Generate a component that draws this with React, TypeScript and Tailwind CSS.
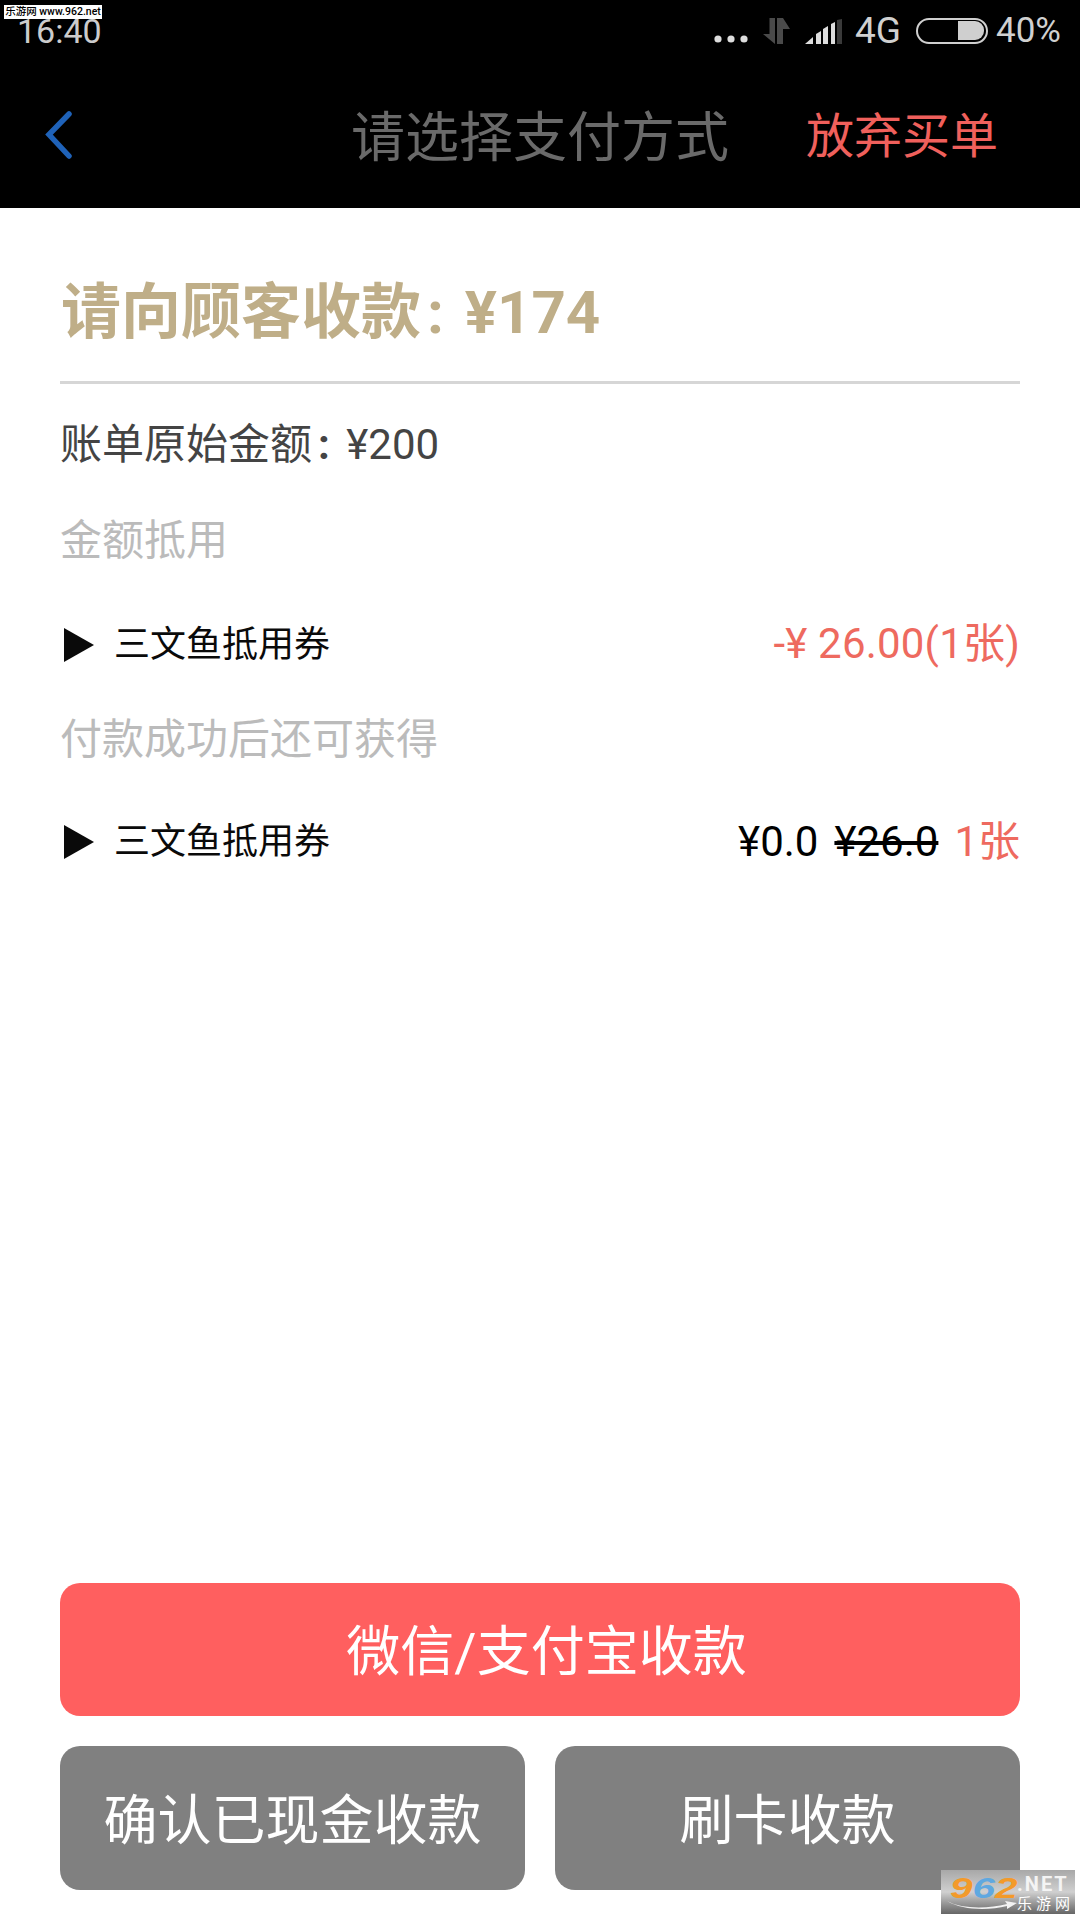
import React from "react";

const font = { fontFamily: 'Roboto, "Noto Sans CJK SC", sans-serif' };

function Triangle() {
  return (
    <svg width="30" height="34" viewBox="0 0 30 34" className="shrink-0">
      <polygon points="0,0 30,17 0,34" fill="#0a0a0a" />
    </svg>
  );
}

function Colon() {
  return <span className="ml-[6px] mr-[6px] font-bold">:</span>;
}

function StatusIcons() {
  return (
    <div className="flex h-[35px] items-center">
      <svg width="34" height="26" viewBox="0 0 34 26">
        <circle cx="4" cy="21" r="3.6" fill="#ddd" />
        <circle cx="17" cy="21" r="3.6" fill="#ddd" />
        <circle cx="30" cy="21" r="3.6" fill="#ddd" />
      </svg>
      <svg width="27" height="26" viewBox="0 0 27 26" className="ml-[15px]">
        <path d="M6.5 0H12V26L0 16H6.5z" fill="#4a4a4a" />
        <path d="M14 0H20L27 11H20V26H14z" fill="#4a4a4a" />
      </svg>
      <svg width="37" height="26" viewBox="0 0 37 26" className="ml-[15px]">
        <path d="M0 26 8 19V26z" fill="#ddd" />
        <path d="M11 16 16 13V26H11z" fill="#ddd" />
        <path d="M18 11 23 8V26H18z" fill="#ddd" />
        <path d="M26 6 30 4V26H26z" fill="#ddd" />
        <path d="M32 2 37 1V26H32z" fill="#3a3a3a" />
      </svg>
      <span className="ml-[13px] text-[37px] leading-none text-[#d0d0d0]">4G</span>
      <div className="ml-[15px] flex h-[26px] w-[72px] items-center justify-end rounded-full border-2 border-[#cfcfcf] pr-[2px]">
        <div className="h-[19px] w-[26px] rounded-r-[9px] bg-[#cfcfcf]" />
      </div>
      <span className="ml-[8px] text-[35px] leading-none text-[#d0d0d0]">40%</span>
    </div>
  );
}

export default function App() {
  return (
    <div style={font} className="relative flex h-[1920px] w-[1080px] flex-col overflow-hidden bg-white">
      <header className="h-[208px] shrink-0 bg-black">
        <div className="flex h-[62px] items-start justify-between pl-[17px] pr-[19px] pt-[13px]">
          <span className="mt-[1px] text-[34px] leading-none text-[#cccccc]">16:40</span>
          <StatusIcons />
        </div>
        <div className="relative flex h-[146px] items-start">
          <svg width="30" height="48" viewBox="0 0 30 48" className="ml-[43px] mt-[49px] shrink-0">
            <path d="M26 3 6 23.5 26 45" fill="none" stroke="#1f62b8" strokeWidth="5.5" strokeLinecap="round" />
          </svg>
          <span className="ml-[278px] mt-[44px] text-[54px] leading-[66px] text-[#6a6a6a]">请选择支付方式</span>
          <span className="ml-[77px] mt-[45px] text-[48px] leading-[60px] text-[#f0605c]">放弃买单</span>
        </div>
      </header>

      <main className="flex flex-1 flex-col px-[60px]">
        <h1 className="mt-[67px] h-[76px] pl-[1px] text-[60px] font-bold leading-[76px] text-[#bfae88]">请向顾客收款<Colon /> ¥174</h1>
        <div className="mt-[30px] h-[3px] bg-[#d6d6d6]" />
        <p className="mt-[33px] text-[42px] leading-[56px] text-[#444444]">账单原始金额<Colon /> ¥200</p>
        <p className="mt-[40px] text-[42px] leading-[56px] text-[#bbbbbb]">金额抵用</p>

        <div className="mt-[48px] flex h-[56px] items-center">
          <span className="ml-[4px]"><Triangle /></span>
          <span className="ml-[20px] text-[36px] leading-none text-[#0a0a0a]">三文鱼抵用券</span>
          <span className="ml-auto -mt-[2px] text-[42px] leading-none tracking-[0.2px] text-[#ee6a5f]">-¥ 26.00(1张)</span>
        </div>
        <p className="mt-[39px] text-[42px] leading-[56px] text-[#bbbbbb]">付款成功后还可获得</p>
        <div className="mt-[46px] flex h-[56px] items-center">
          <span className="ml-[4px]"><Triangle /></span>
          <span className="ml-[20px] text-[36px] leading-none text-[#0a0a0a]">三文鱼抵用券</span>
          <span className="ml-auto text-[42px] leading-none text-black">¥0.0</span>
          <span className="ml-[16px] text-[42px] leading-none text-black line-through">¥26.0</span>
          <span className="ml-[16px] text-[42px] leading-none text-[#ee6a5f]">1张</span>
        </div>

        <div className="mt-auto mb-[30px] flex flex-col gap-[30px]">
          <button className="flex h-[133px] items-center justify-center rounded-[20px] bg-[#ff5f5f] pl-[13px] pt-[6px] text-[54px] text-white">微信/支付宝收款</button>
          <div className="flex gap-[30px]">
            <button className="flex h-[144px] flex-1 items-center justify-center rounded-[20px] bg-[#808080] pt-[6px] text-[54px] text-white">确认已现金收款</button>
            <button className="flex h-[144px] flex-1 items-center justify-center rounded-[20px] bg-[#808080] pt-[6px] text-[54px] text-white">刷卡收款</button>
          </div>
        </div>
      </main>

      <div className="absolute left-[4px] top-[5px] flex h-[14px] w-[98px] items-center justify-center whitespace-nowrap bg-white text-[10.5px] font-medium leading-none text-black">乐游网 www.962.net</div>

      <div className="absolute left-[941px] top-[1870px] flex h-[44px] w-[134px] bg-gradient-to-b from-[#a8a8a8] via-[#d0d0d0] to-[#666666]">
        <div className="relative w-[76px] shrink-0">
          <span className="absolute left-[9px] top-[3px] origin-left scale-x-[1.35] text-[30px] font-black italic leading-none text-[#f39a2a]" style={{ fontFamily: '"Liberation Sans", sans-serif' }}>9<span className="text-[#5fa8e0]">6</span>2</span>
          <svg width="70" height="12" viewBox="0 0 70 12" className="absolute bottom-[3px] left-[6px]">
            <path d="M0 2C15 10 40 10 60 5L58 2 70 4 60 10 60 7C40 12 15 11 0 2z" fill="#f2f2f2" />
          </svg>
        </div>
        <div className="flex flex-1 flex-col items-start">
          <span className="mt-[4px] text-[20px] font-bold leading-[20px] tracking-[2px] text-[#f4f4f4]">.NET</span>
          <span className="mt-[2px] text-[15px] leading-[16px] tracking-[4px] text-white">乐游网</span>
        </div>
      </div>
    </div>
  );
}
